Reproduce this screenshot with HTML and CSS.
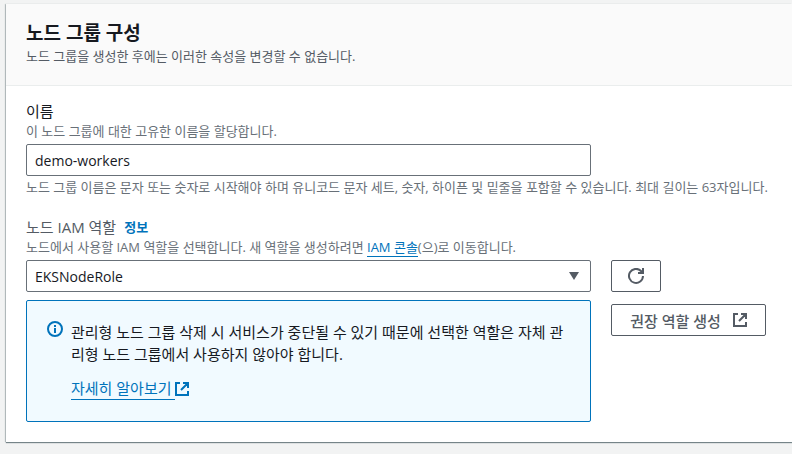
FILE: index.html
```
<!DOCTYPE html>
<html lang="ko">
   <head>
      <meta charset="utf-8">
      <meta name="viewport" content="width=device-width, initial-scale=1">
      <title>노드 그룹 구성</title>
      <link rel="stylesheet" href="styles.css">
   </head>
   <body>
      <section class="panel">
         <header class="panel-header">
            <h2>노드 그룹 구성</h2>
            <p>노드 그룹을 생성한 후에는 이러한 속성을 변경할 수 없습니다.</p>
         </header>

         <form class="panel-body">
            <!--
            Name
            -->
            <div class="field">
               <label class="label" for="name">이름</label>
               <p class="description">이 노드 그룹에 대한 고유한 이름을 할당합니다.</p>
               <div class="row">
                  <input type="text" class="control" id="name" value="demo-workers">
               </div>
               <p class="hint">노드 그룹 이름은 문자 또는 숫자로 시작해야 하며 유니코드 문자 세트, 숫자, 하이픈 및 밑줄을 포함할 수 있습니다. 최대 길이는 63자입니다.</p>
            </div>

            <!--
            Node role
            -->
            <div class="field">
               <div class="label-row">
                  <label class="label muted" for="role">노드 IAM 역할</label>
                  <a class="info" href="#">정보</a>
               </div>
               <p class="description">노드에서 사용할 IAM 역할을 선택합니다. 새 역할을 생성하려면 <a class="link" href="#">IAM 콘솔</a>(으)로 이동합니다.</p>
               <div class="row">
                  <div class="stack">
                     <div class="select">
                        <select class="control" id="role">
                           <option>EKSNodeRole</option>
                        </select>
                        <svg class="arrow" width="10" height="8" viewBox="0 0 10 8" aria-hidden="true">
                           <path d="M0 0H10L5 8Z" />
                        </svg>
                     </div>
                     <div class="alert">
                        <svg class="icon" width="16" height="16" viewBox="0 0 16 16" aria-hidden="true">
                           <circle cx="8" cy="8" r="7" />
                           <path d="M8 4V6M8 7V12" />
                        </svg>
                        <div>
                           <p>관리형 노드 그룹 삭제 시 서비스가 중단될 수 있기 때문에 선택한 역할은 자체 관리형 노드 그룹에서 사용하지 않아야 합니다.</p>
                           <a class="more" href="#"><span class="link">자세히 알아보기&nbsp;</span><svg class="icon" width="14" height="14" viewBox="0 0 14 14" aria-hidden="true">
                              <path d="M5 1H1V13H13V9M8 1H13V6M13 1L6 8" />
                           </svg></a>
                        </div>
                     </div>
                  </div>
                  <div class="actions">
                     <button type="button" class="button refresh" aria-label="새로 고침">
                        <svg class="icon" width="16" height="16" viewBox="0 0 16 16" aria-hidden="true">
                           <path d="M15 8A7 7 0 1 1 13 3L15 5M15 0V5H10" />
                        </svg>
                     </button>
                     <button type="button" class="button">
                        권장 역할 생성
                        <svg class="icon" width="14" height="14" viewBox="0 0 14 14" aria-hidden="true">
                           <path d="M5 1H1V13H13V9M8 1H13V6M13 1L6 8" />
                        </svg>
                     </button>
                  </div>
               </div>
            </div>
         </form>
      </section>
   </body>
</html>
```
FILE: styles.css
```
* {
   box-sizing : border-box;
}

body {
   margin : 0;
   padding : 4px 0 12px 6px;
   background-color : #f2f3f3;
   color : #16191f;
   font-family : "Open Sans", "Noto Sans CJK KR", sans-serif;
   font-size : 15px;
   line-height : 22px;
}

h2, p {
   margin : 0;
}

a {
   color : #0073bb;
   text-decoration : none;
}

.panel {
   background-color : white;
   box-shadow : 0 1px 1px 0 rgba(0, 28, 36, 0.5), -1px 0 1px 0 rgba(0, 28, 36, 0.2);
}

.panel-header {
   padding : 16px 20px 19px;
   border-bottom : 1px solid #eaeded;
   background-color : #fafafa;
}

.panel-header h2 {
   font-size : 19px;
   line-height : 26px;
   font-weight : 700;
}

.panel-header p {
   color : #545b64;
   font-size : 13px;
   line-height : 20px;
}

.panel-body {
   padding : 15px 26px 20px 20px;
}

.field + .field {
   margin-top : 21px;
}

.label {
   display : block;
   line-height : 21px;
}

.muted {
   color : #545b64;
}

.label-row {
   display : flex;
   gap : 8px;
}

.info {
   font-size : 13px;
   line-height : 21px;
   font-weight : 700;
}

.description, .hint {
   color : #687078;
   font-size : 13px;
   line-height : 18px;
}

.hint {
   margin-top : 2px;
   white-space : nowrap;
}

.link {
   border-bottom : 1px solid #0073bb;
}

/* second column holds the buttons */
.row {
   display : grid;
   grid-template-columns : minmax(0, 1fr) 155px;
   gap : 20px;
   margin-top : 4px;
}

.control {
   display : block;
   width : 100%;
   height : 32px;
   padding : 0 8px;
   border : 1px solid #687078;
   border-radius : 2px;
   background-color : white;
   color : #16191f;
   font-family : inherit;
   font-size : 14px;
   appearance : none;
}

.select {
   position : relative;
}

.arrow {
   position : absolute;
   top : 12px;
   right : 12px;
   fill : #545b64;
   pointer-events : none;
}

.stack {
   display : flex;
   flex-direction : column;
   gap : 8px;
}

.alert {
   display : flex;
   gap : 8px;
   padding : 20px 20px 21px;
   border : 1px solid #0073bb;
   border-radius : 2px;
   background-color : #f1faff;
}

.icon {
   flex : none;
   fill : none;
   stroke : currentColor;
   stroke-width : 2px;
}

.alert .icon {
   color : #0073bb;
}

.more {
   display : flex;
   align-items : center;
   margin-top : 12px;
}

.actions {
   display : flex;
   flex-direction : column;
   align-items : flex-start;
   gap : 12px;
}

.button {
   display : flex;
   align-items : center;
   justify-content : center;
   gap : 12px;
   width : 100%;
   height : 32px;
   padding : 0;
   border : 1px solid #545b64;
   border-radius : 2px;
   background-color : white;
   color : #545b64;
   font-family : inherit;
   font-size : 15px;
   font-weight : 500;
}

.refresh {
   width : 50px;
}
```
